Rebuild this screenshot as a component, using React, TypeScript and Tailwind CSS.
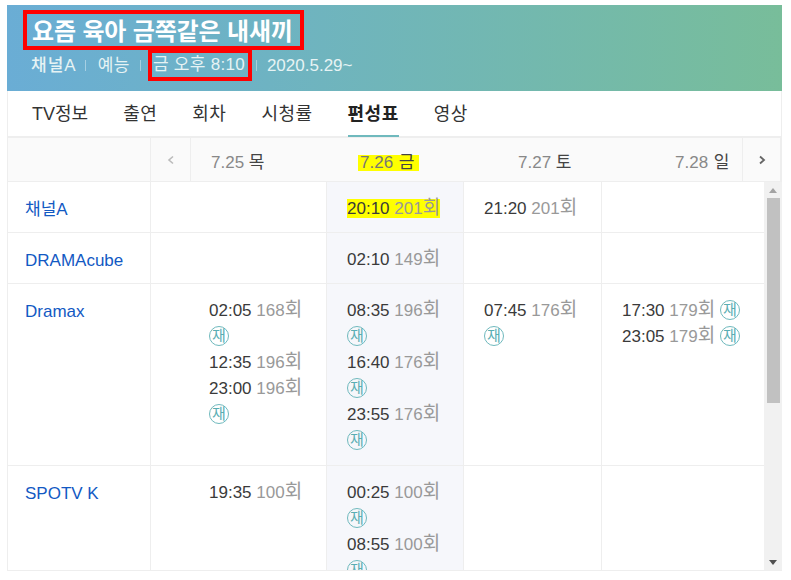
const Ep = ({ t, n, re, hl }: { t: string; n: string; re?: boolean; hl?: boolean }) => (
  <div className="leading-[26px]">
    <span className={hl ? "bg-[#ffff00]" : ""}>
      <span className="text-[#3a3a3a]">{t}</span>{" "}
      <span className="text-[#999]">{n}<span className="text-[19px] leading-none">회</span></span>
    </span>
    {re && (
      <>
        {" "}
        <span className="inline-flex w-[20px] h-[20px] rounded-full border border-[#6fb9bd] text-[#5aaeb3] text-[15px] leading-none items-center justify-center align-[1px]">재</span>
      </>
    )}
  </div>
);

const Row = ({ name, h, cells }: { name: string; h: string; cells: React.ReactNode[] }) => (
  <div className={`flex border-b border-[#eeeeee] ${h}`}>
    <div className="w-[143px] shrink-0 pl-[17px] pt-[15px] leading-[26px] text-[#1259c3] border-r border-[#eeeeee]">{name}</div>
    <div className="w-[176px] shrink-0 pl-[58px] pr-[18px] pt-[14px] border-r border-[#eeeeee]">{cells[0]}</div>
    <div className="w-[137px] shrink-0 pl-[20px] pr-[18px] pt-[14px] border-r border-[#eeeeee] bg-[#f6f7fb]">{cells[1]}</div>
    <div className="w-[138px] shrink-0 pl-[20px] pr-[18px] pt-[14px] border-r border-[#eeeeee]">{cells[2]}</div>
    <div className="flex-1 pl-[20px] pr-[18px] pt-[14px]">{cells[3]}</div>
  </div>
);

export default function App() {
  return (
    <div className="w-[791px] h-[580px] bg-white overflow-hidden pt-[5px] pl-[7px] text-[17px]" style={{ fontFamily: '"Liberation Sans","Noto Sans CJK KR",sans-serif' }}>
      <div className="w-[775px] h-[566px] flex flex-col border-b border-[#eeeeee] overflow-hidden">
        <div className="h-[86px] shrink-0 bg-gradient-to-r from-[#6aadd5] to-[#78bd9a] pl-[16px] pt-[5px] text-white">
          <div className="w-[281px] h-[40px] border-[4px] border-[#ff0000] pl-[5px] text-[24px] font-bold leading-[35px] tracking-[-0.15px] whitespace-nowrap">요즘 육아 금쪽같은 내새끼</div>
          <div className="flex items-center h-[31px] pl-[8px] text-[#e6f3f4] whitespace-nowrap">
            <span className="font-medium tracking-[1px]">채널A</span>
            <span className="w-px h-[11px] bg-white/40 ml-[8px] mr-[12px]" />
            <span className="tracking-[0.5px]">예능</span>
            <span className="w-px h-[11px] bg-white/40 ml-[10px] mr-[7px]" />
            <span className="w-[104px] h-[31px] border-[4px] border-[#ff0000] border-t-[3px] pl-[1px] leading-[23px] tracking-[0.3px] whitespace-nowrap">금 오후 8:10</span>
            <span className="w-px h-[11px] bg-white/40 ml-[4px] mr-[10px]" />
            <span>2020.5.29~</span>
          </div>
        </div>

        <div className="h-[47px] shrink-0 flex pl-[24px] gap-[35px] border-b-2 border-x border-[#eeeeee] text-[18px] text-[#333]">
          {["TV정보", "출연", "회차", "시청률", "편성표", "영상"].map((x) => (
            <div key={x} className={`h-[46px] leading-[47px] ${x === "TV정보" ? "" : "tracking-[0.5px]"} ${x === "편성표" ? "font-bold text-[#222] border-b-2 border-[#6fb9bd]" : ""}`}>{x}</div>
          ))}
        </div>

        <div className="h-[44px] shrink-0 flex bg-[#fafafa] border-b border-x border-[#eeeeee] text-[#888] leading-[50px] whitespace-nowrap">
          <div className="w-[143px] shrink-0 border-r border-[#eeeeee]" />
          <div className="w-[40px] shrink-0 border-r border-[#eeeeee] flex items-center justify-center text-[#bbb]">
            <svg width="8" height="10" viewBox="0 0 8 10" fill="none" stroke="currentColor" strokeWidth="1.6"><path d="M6 1.5 2 5l4 3.5" /></svg>
          </div>
          <div className="w-[150px] shrink-0 pl-[20px]">7.25 <span className="text-[#444]">목</span></div>
          <div className="w-[158px] shrink-0 pl-[17px]"><span className="bg-[#ffff00] inline-block leading-[16px] pl-[2px] pr-[5px] text-[#777]">7.26 <span className="text-[#444] ml-[1px]">금</span></span></div>
          <div className="w-[157px] shrink-0 pl-[19px]">7.27 <span className="text-[#444]">토</span></div>
          <div className="w-[87px] shrink-0 pl-[19px] border-r border-[#eeeeee]">7.28 <span className="text-[#444] ml-[1px]">일</span></div>
          <div className="flex-1 flex items-center justify-center text-[#666] border-r border-[#eeeeee]">
            <svg width="8" height="10" viewBox="0 0 8 10" fill="none" stroke="currentColor" strokeWidth="1.8"><path d="M2 1.5 6 5 2 8.5" /></svg>
          </div>
        </div>

        <div className="flex-1 min-h-0 flex border-l border-[#eeeeee]">
          <div className="w-[756px] shrink-0 overflow-hidden">
            <Row name="채널A" h="h-[51px]" cells={[null, <Ep t="20:10" n="201" hl />, <Ep t="21:20" n="201" />, null]} />
            <Row name="DRAMAcube" h="h-[51px]" cells={[null, <Ep t="02:10" n="149" />, null, null]} />
            <Row name="Dramax" h="h-[182px]" cells={[
              <><Ep t="02:05" n="168" re /><Ep t="12:35" n="196" /><Ep t="23:00" n="196" re /></>,
              <><Ep t="08:35" n="196" re /><Ep t="16:40" n="176" re /><Ep t="23:55" n="176" re /></>,
              <Ep t="07:45" n="176" re />,
              <><Ep t="17:30" n="179" re /><Ep t="23:05" n="179" re /></>,
            ]} />
            <Row name="SPOTV K" h="h-[200px]" cells={[
              <Ep t="19:35" n="100" />,
              <><Ep t="00:25" n="100" re /><Ep t="08:55" n="100" re /></>,
              null,
              null,
            ]} />
          </div>
          <div className="flex-1 bg-[#f1f1f1] flex flex-col items-center">
            <div className="h-[16px] shrink-0 flex items-center justify-center">
              <svg width="8" height="5" viewBox="0 0 8 5"><path d="M4 0 8 5H0z" fill="#a3a3a3" /></svg>
            </div>
            <div className="w-[13px] h-[205px] bg-[#c1c1c1]" />
            <div className="flex-1" />
            <div className="h-[16px] shrink-0 flex items-center justify-center">
              <svg width="8" height="5" viewBox="0 0 8 5"><path d="M4 5 8 0H0z" fill="#505050" /></svg>
            </div>
          </div>
        </div>
      </div>
    </div>
  );
}
